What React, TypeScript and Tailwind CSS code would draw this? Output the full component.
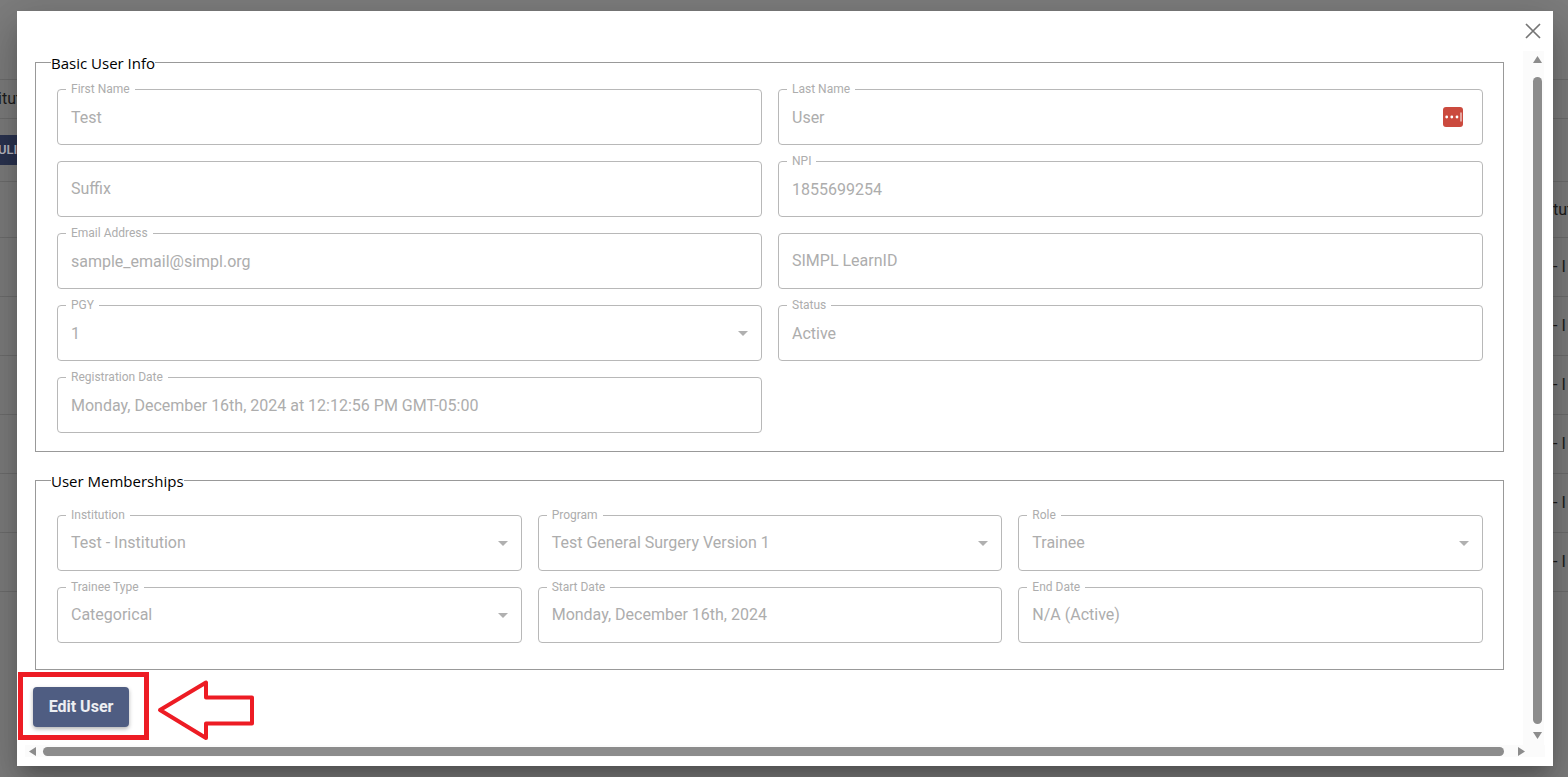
import React from 'react';

const roboto = "font-['Roboto',sans-serif]";

type FieldProps = {
  label?: string;
  value: string;
  select?: boolean;
  manager?: boolean;
  raised?: boolean;
};

const Field: React.FC<FieldProps> = ({ label, value, select, manager, raised }) => (
  <div className="relative h-14 flex items-center justify-between pl-[13px] pr-[6px] border border-[#b8b8b8] rounded">
    {label && (
      <span className="absolute -top-[8px] left-[8px] px-[5px] bg-white text-xs leading-[15px] text-[#adadad]">
        {label}
      </span>
    )}
    <span className={`${raised ? 'pt-0' : 'pt-[2px]'} text-base text-[#adadad] whitespace-nowrap`}>{value}</span>
    {select && (
      <svg width="24" height="24" viewBox="0 0 24 24" fill="#b0b0b0">
        <path d="M7 10l5 5 5-5z" />
      </svg>
    )}
    {manager && (
      <svg width="20" height="20" viewBox="0 0 20 20" className="mr-[13px]">
        <rect width="20" height="20" rx="3" fill="#cb4a3e" />
        <circle cx="3.700" cy="10" r="1.400" fill="#fff" />
        <circle cx="8.800" cy="10" r="1.400" fill="#fff" />
        <circle cx="14" cy="10" r="1.400" fill="#fff" />
        <rect x="17.500" y="5.500" width="1" height="9" fill="#fff" />
      </svg>
    )}
  </div>
);

const Group: React.FC<{ title: string; className?: string; children: React.ReactNode }> = ({ title, className, children }) => (
  <fieldset className={`border border-[#999999] pl-[21px] pr-5 ${className || ''}`}>
    <legend className="-ml-[6px] font-['Open_Sans',sans-serif] text-[15px] leading-5 text-black">
      <span className="relative top-px">{title}</span>
    </legend>
    {children}
  </fieldset>
);

const BgRow: React.FC<{ height: string; left?: string; right?: string; button?: boolean }> = ({ height, left, right, button }) => (
  <div className={`${height} flex items-center justify-between border-b border-[#6e6e6e] text-[#1c1c1c] text-base overflow-hidden`}>
    <div className="w-[17px] overflow-hidden whitespace-nowrap">
      {left && <span className="-ml-[2px]">{left}</span>}
      {button && (
        <div className="h-[30px] w-[17px] bg-[#2a3350] text-[#b9b9c2] text-[13px] font-semibold leading-[30px] overflow-hidden">
          <span className="-ml-[2px]">ULI</span>
        </div>
      )}
    </div>
    <div className="w-[15px] overflow-hidden whitespace-nowrap">{right}</div>
  </div>
);

const App: React.FC = () => {
  return (
    <div className={`relative h-[777px] w-[1568px] overflow-hidden bg-[#7d7d7d] ${roboto}`}>
      {/* page behind the dialog */}
      <div className="h-[80px] border-b border-[#6e6e6e]" />
      <BgRow height="h-[39px]" left="itut" />
      <BgRow height="h-[63px]" button />
      <BgRow height="h-[56px]" right="tut" />
      <BgRow height="h-[59px]" right=" - I" />
      <BgRow height="h-[59px]" right=" - I" />
      <BgRow height="h-[59px]" right=" - I" />
      <BgRow height="h-[59px]" right=" - I" />
      <BgRow height="h-[59px]" right=" - I" />
      <BgRow height="h-[59px]" right=" - I" />

      {/* dialog */}
      <div className="absolute left-[17px] top-[11px] w-[1536px] h-[755px] bg-white flex flex-col pt-10 shadow-[0_11px_15px_-7px_rgba(0,0,0,0.2),0_24px_38px_3px_rgba(0,0,0,0.14),0_9px_46px_8px_rgba(0,0,0,0.12)]">
        <svg className="absolute right-[12px] top-[12px]" width="16" height="16" viewBox="0 0 16 16" stroke="#757575" strokeWidth="1.700" fill="none">
          <path d="M1 1l14 14M15 1L1 15" />
        </svg>

        <div className="h-[694px] flex">
          <div className="w-[1469px] ml-[18px] pt-px">
            <Group title="Basic User Info" className="pt-[17px] pb-[18px]">
              <div className="grid grid-cols-2 gap-4">
                <Field label="First Name" value="Test" />
                <Field label="Last Name" value="User" manager />
                <Field value="Suffix" raised />
                <Field label="NPI" value="1855699254" />
                <Field label="Email Address" value="sample_email@simpl.org" />
                <Field value="SIMPL LearnID" raised />
                <Field label="PGY" value="1" select />
                <Field label="Status" value="Active" />
                <Field label="Registration Date" value="Monday, December 16th, 2024 at 12:12:56 PM GMT-05:00" />
              </div>
            </Group>
            <Group title="User Memberships" className="mt-[18px] pt-[25px] pb-[26px]">
              <div className="grid grid-cols-3 gap-4">
                <Field label="Institution" value="Test - Institution" select raised />
                <Field label="Program" value="Test General Surgery Version 1" select raised />
                <Field label="Role" value="Trainee" select raised />
                <Field label="Trainee Type" value="Categorical" select raised />
                <Field label="Start Date" value="Monday, December 16th, 2024" raised />
                <Field label="End Date" value="N/A (Active)" raised />
              </div>
            </Group>
            <button className="mt-[17px] -ml-[2px] h-10 w-24 rounded bg-[#4f5d82] text-base font-bold text-white/90 shadow-[0_2px_4px_rgba(0,0,0,0.3)]">
              Edit User
            </button>
          </div>

          {/* vertical scrollbar */}
          <div className="ml-[19px] w-[21px] pl-[10px] bg-[#fbfbfb] flex flex-col">
            <svg width="9" height="7" viewBox="0 0 9 7" fill="#8c8c8c" className="mt-[5px]">
              <path d="M4.500 0L9 7H0z" />
            </svg>
            <div className="mt-[14px] w-[9px] h-[647px] rounded-full bg-[#8c8c8c]" />
            <svg width="9" height="7" viewBox="0 0 9 7" fill="#8c8c8c" className="mt-2">
              <path d="M0 0h9L4.500 7z" />
            </svg>
          </div>
        </div>

        {/* horizontal scrollbar */}
        <div className="ml-2 w-[1520px] h-3 bg-[#fbfbfb] flex items-center">
          <svg width="7" height="9" viewBox="0 0 7 9" fill="#8c8c8c" className="ml-1">
            <path d="M7 0v9L0 4.500z" />
          </svg>
          <div className="ml-[7px] w-[1461px] h-[9px] rounded-full bg-[#8c8c8c]" />
          <svg width="7" height="9" viewBox="0 0 7 9" fill="#8c8c8c" className="ml-[14px]">
            <path d="M0 0v9l7-4.500z" />
          </svg>
        </div>

        {/* red annotation over the button */}
        <div className="absolute left-px top-[661px] w-[131px] h-[68px] border-[5px] border-[#ed1c24]" />
        <svg className="absolute left-[138px] top-[666px]" width="100" height="66" viewBox="0 0 100 66" fill="none" stroke="#ed1c24" strokeWidth="4" strokeLinejoin="round">
          <path d="M5 33L51 5.500V20.500H97V46.500H51V61z" />
        </svg>
      </div>
    </div>
  );
};

export default App;
